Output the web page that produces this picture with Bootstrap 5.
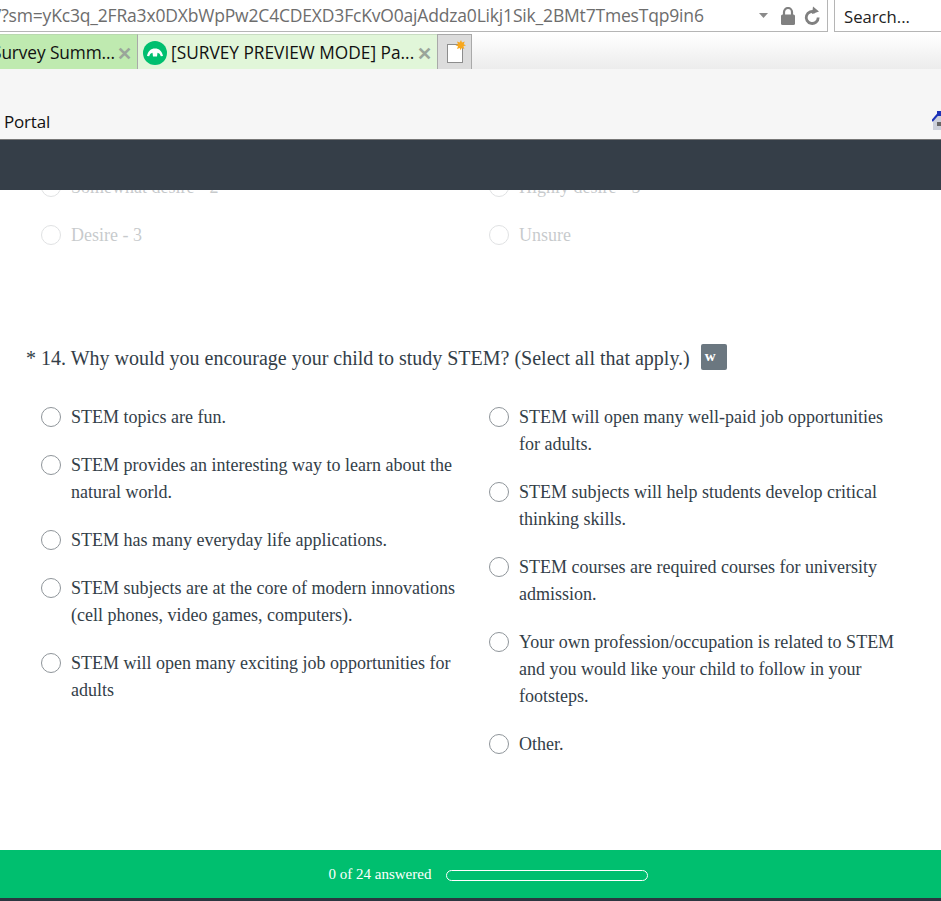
<!DOCTYPE html>
<html lang="en">
<head>
<meta charset="utf-8">
<title>Survey preview</title>
<link rel="stylesheet" href="https://cdn.jsdelivr.net/npm/bootstrap@5.3.0/dist/css/bootstrap.min.css">
<style>
html,body{height:100%;overflow:hidden;background:#fff}
.shell{height:901px}
.ui-font{font-family:"Open Sans","Noto Sans",sans-serif}
.addr-row{height:34px;background:#fff}
.addr-box{width:828px;height:32px;border-right:1px solid #b5b5b5;border-bottom:1px solid #b5b5b5;color:#6d6d6d;font-size:17.5px;padding-right:7px;overflow:hidden;white-space:nowrap}
.addr-url{margin-left:-5px;flex:1;letter-spacing:-.18px}
.ic-drop{margin-right:13px}
.ic-lock{margin-right:9px}
.search-box{margin-left:6px;flex:1;height:32px;border-left:1px solid #b5b5b5;border-bottom:1px solid #b5b5b5;color:#222;font-size:16.7px;padding-left:9px;line-height:33px}
.tab-row{height:35px;background:linear-gradient(#fff,#ececec)}
.tab-one,.tab-two{height:35px;font-size:17.3px;color:#111;white-space:nowrap;overflow:hidden;padding-top:2px}
.tab-one{width:138px;background:#bfeab0;border-right:1px solid #a9a9a9;border-top:1px solid #b9d8ae;padding-right:5px}
.tab-two{width:299px;background:#e1f6d9;border-top:1px solid #c9dcc2;padding-right:5px}
.tab-one .tab-name{margin-left:-8px;flex:1;letter-spacing:-.1px}
.tab-logo{margin:0 4px 0 5px}
.tab-x{color:#9aa59a;font-size:18px;font-weight:700;line-height:1}
.tab-new{width:35px;height:35px;background:#dcdcdc;border:1px solid #a9a9a9;border-bottom:0}
.menu-row{height:71px;background:#f6f6f6;border-bottom:1px solid #777;color:#111;font-size:17px;letter-spacing:-.2px;padding-left:4px;padding-bottom:5px}
.home-ic{margin-bottom:3px}
.dark-bar{height:50px;background:#353e48;position:relative;z-index:2}
.survey{flex:1;overflow:hidden;font-family:"Liberation Serif",serif;color:#333e48;font-size:18px;line-height:27px}
.survey-inner{margin-top:-16px;padding-left:41px}
.cols{display:grid;grid-template-columns:448px 412px}
.opt{display:flex;margin-bottom:21px}
.opt .form-check-input{width:20px;height:20px;flex:none;margin:3px 10px 0 0;border:1px solid #8f959a;background-color:#fff}
.faded{opacity:.27}
.q-title{font-size:20px;line-height:27px;margin:74px 0 32px -15px;font-weight:400;color:#333e48}
.q-star{margin-right:5px}
.q-tag{display:inline-block;width:26px;height:26px;background:#6b7780;color:#fff;font-size:15px;line-height:24px;text-align:left;padding-left:4px;border-radius:2px;margin-left:6px;vertical-align:4px;font-weight:700}
.foot{height:48px;background:#00bf6f;color:#fff;font-family:"Liberation Serif",serif;font-size:15px;padding-left:36px}
.foot-track{width:202px;height:11px;border:1px solid #fff;border-radius:6px;margin-left:15px;margin-top:2px}
.foot-edge{height:3px;background:#2b3640}
</style>
</head>
<body>
<div class="shell d-flex flex-column">
  <div class="addr-row d-flex ui-font">
    <div class="addr-box d-flex align-items-center">
      <span class="addr-url">/?sm=yKc3q_2FRa3x0DXbWpPw2C4CDEXD3FcKvO0ajAddza0Likj1Sik_2BMt7TmesTqp9in6</span>
      <svg class="ic-drop" width="9" height="5" viewBox="0 0 9 5"><path d="M0 0h9L4.500 5z" fill="#8a8a8a"/></svg>
      <svg class="ic-lock" width="14" height="18" viewBox="0 0 14 18"><path d="M3 8V5a4 4 0 0 1 8 0v3" fill="none" stroke="#808080" stroke-width="2.200"/><rect x="0" y="7.500" width="14" height="10.500" rx="1.500" fill="#808080"/></svg>
      <svg width="16" height="20" viewBox="0 0 16 20"><path d="M11.200 6.300a6 6 0 1 0 3 5.200" fill="none" stroke="#808080" stroke-width="2.800"/><path d="M9 0.500l6 5-7 2.500z" fill="#808080"/></svg>
    </div>
    <div class="search-box">Search...</div>
  </div>
  <div class="tab-row d-flex ui-font">
    <div class="tab-one d-flex align-items-center"><span class="tab-name">Survey Summ...</span><span class="tab-x">✕</span></div>
    <div class="tab-two d-flex align-items-center">
      <svg class="tab-logo flex-shrink-0" width="24" height="24" viewBox="0 0 24 24"><circle cx="12" cy="12" r="12" fill="#00bf6f"/><path d="M4 15c1-5 3.800-7.500 8-7.500s7 2.500 8 7.500l-2.200.3c-.6-2-1.600-3.200-3.300-3.500l-.5 3.700H10l-.5-3.700c-1.700.3-2.700 1.500-3.300 3.500z" fill="#fff"/></svg>
      <span class="flex-grow-1">[SURVEY PREVIEW MODE] Pa...</span><span class="tab-x">✕</span>
    </div>
    <div class="tab-new d-flex align-items-start justify-content-center pt-1">
      <svg width="22" height="26" viewBox="0 0 22 26"><rect x="3.500" y="5.500" width="15" height="18" fill="#fff" stroke="#8d8d8d"/><path d="M17 1l1 2.600 2.700-1-1 2.700 2.300 1-2.600 1 1 2.700-2.700-1-1 2.300-1-2.300-2.700 1 1-2.700-2.600-1 2.600-1-1-2.700 2.700 1z" fill="#f7a71c"/></svg>
    </div>
  </div>
  <div class="menu-row d-flex align-items-end justify-content-between ui-font">
    <span>Portal</span>
    <svg class="home-ic" width="9" height="20" viewBox="0 0 9 20"><path d="M1 9L9 2v17H1z" fill="#ccd0da"/><path d="M0 10L7 2" stroke="#1c32b8" stroke-width="2" fill="none"/><path d="M5 0h4v5H5z" fill="#1c32b8"/><rect x="5" y="11" width="4" height="4" fill="#666"/></svg>
  </div>
  <div class="dark-bar"></div>
  <main class="survey">
    <div class="survey-inner">
      <div class="cols faded">
        <div>
          <div class="opt"><input class="form-check-input" type="radio" aria-label="Somewhat desire - 2"><span>Somewhat desire - 2</span></div>
          <div class="opt"><input class="form-check-input" type="radio" aria-label="Desire - 3"><span>Desire - 3</span></div>
        </div>
        <div>
          <div class="opt"><input class="form-check-input" type="radio" aria-label="Highly desire - 5"><span>Highly desire - 5</span></div>
          <div class="opt"><input class="form-check-input" type="radio" aria-label="Unsure"><span>Unsure</span></div>
        </div>
      </div>
      <h2 class="q-title"><span class="q-star">*</span>14. Why would you encourage your child to study STEM? (Select all that apply.) <span class="q-tag">w</span></h2>
      <div class="cols">
        <div>
          <label class="opt"><input class="form-check-input" type="radio"><span>STEM topics are fun.</span></label>
          <label class="opt"><input class="form-check-input" type="radio"><span>STEM provides an interesting way to learn about the<br>natural world.</span></label>
          <label class="opt"><input class="form-check-input" type="radio"><span>STEM has many everyday life applications.</span></label>
          <label class="opt"><input class="form-check-input" type="radio"><span>STEM subjects are at the core of modern innovations<br>(cell phones, video games, computers).</span></label>
          <label class="opt"><input class="form-check-input" type="radio"><span>STEM will open many exciting job opportunities for<br>adults</span></label>
        </div>
        <div>
          <label class="opt"><input class="form-check-input" type="radio"><span>STEM will open many well-paid job opportunities<br>for adults.</span></label>
          <label class="opt"><input class="form-check-input" type="radio"><span>STEM subjects will help students develop critical<br>thinking skills.</span></label>
          <label class="opt"><input class="form-check-input" type="radio"><span>STEM courses are required courses for university<br>admission.</span></label>
          <label class="opt"><input class="form-check-input" type="radio"><span>Your own profession/occupation is related to STEM<br>and you would like your child to follow in your<br>footsteps.</span></label>
          <label class="opt"><input class="form-check-input" type="radio"><span>Other.</span></label>
        </div>
      </div>
    </div>
  </main>
  <footer class="foot d-flex align-items-center justify-content-center">
    <span>0 of 24 answered</span><div class="foot-track"></div>
  </footer>
  <div class="foot-edge"></div>
</div>
<script src="https://cdn.jsdelivr.net/npm/bootstrap@5.3.0/dist/js/bootstrap.bundle.min.js"></script>
</body>
</html>
